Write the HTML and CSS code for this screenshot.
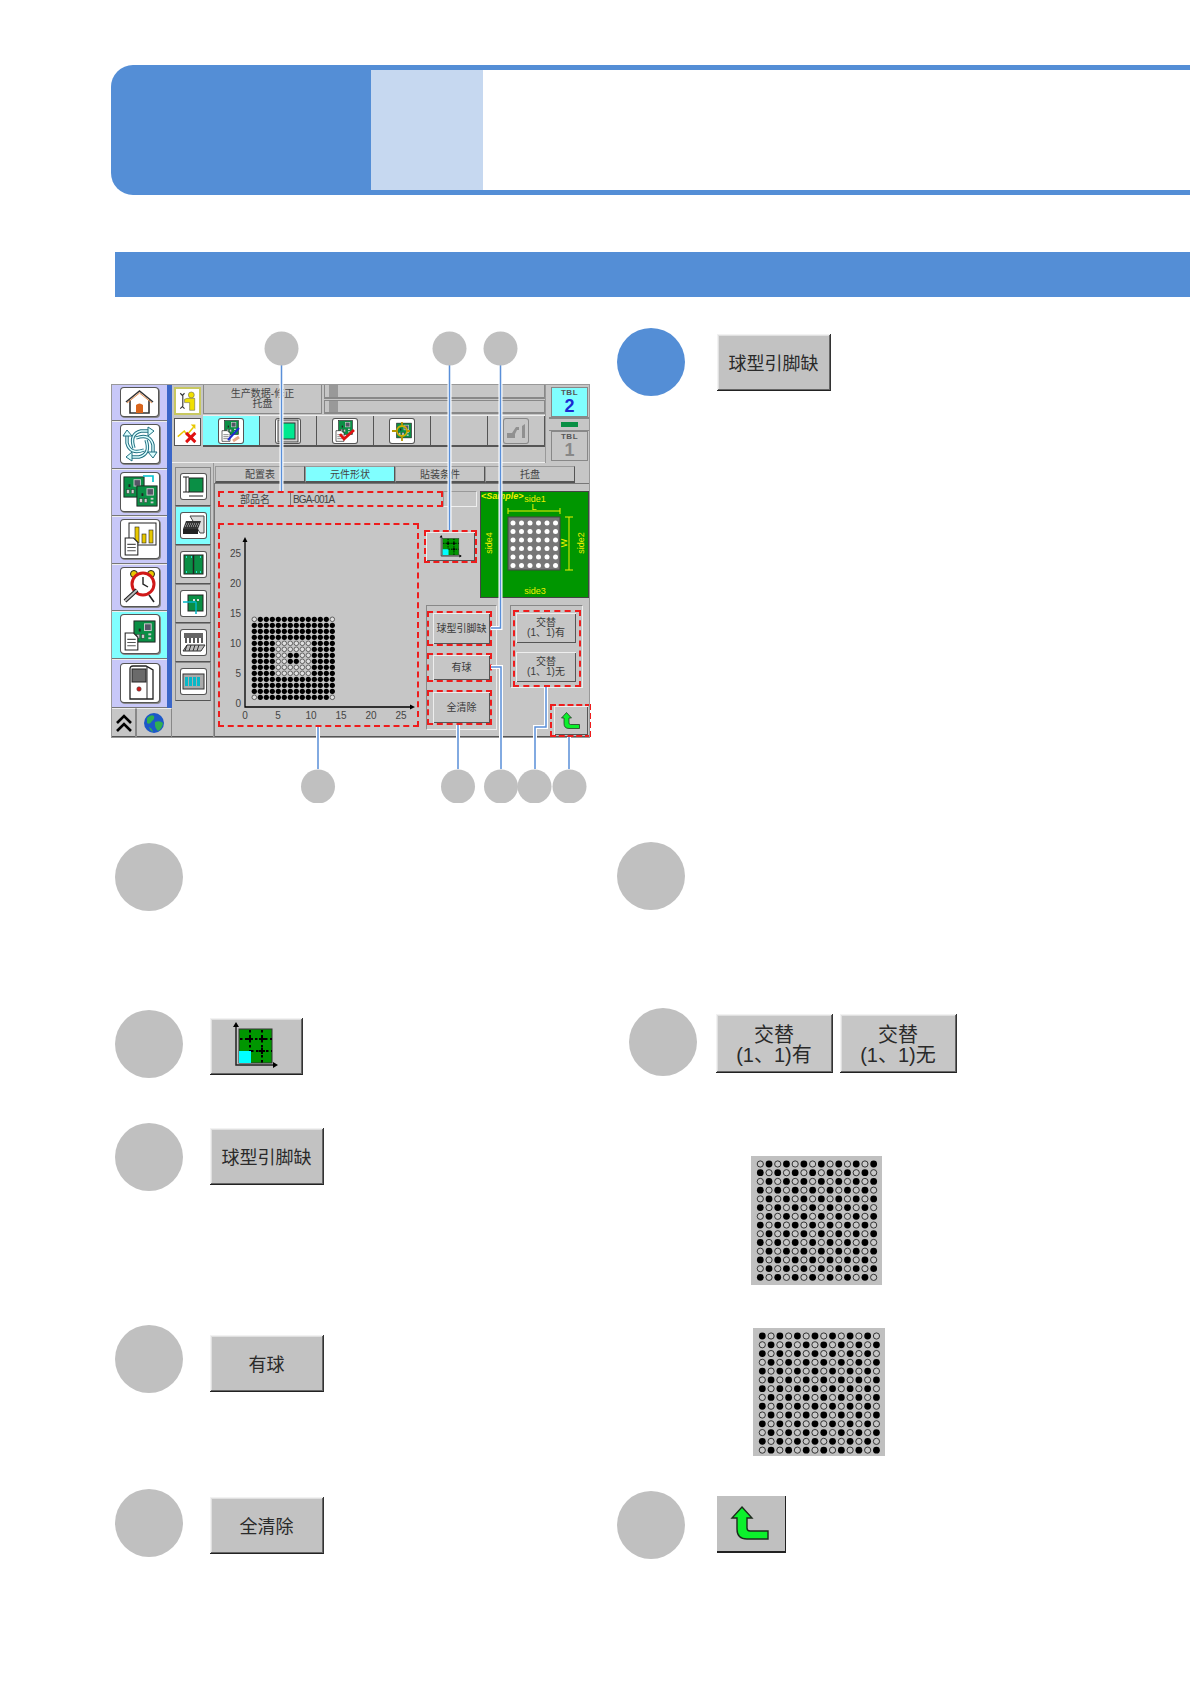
FILE: index.html
```html
<!DOCTYPE html>
<html lang="zh">
<head>
  <meta charset="UTF-8">
  <title>元件形状</title>
  <link rel="stylesheet" href="styles.css">
</head>
<body>
  <svg class="defs" width="0" height="0">
    <defs>
      <symbol id="pcb" viewBox="0 0 24 24">
        <rect x="1" y="1" width="22" height="22" fill="#0a8f45" stroke="#222"/>
        <rect x="12" y="4" width="7" height="7" fill="#556" stroke="#ccc"/>
        <rect x="4" y="15" width="3" height="4" fill="#ccc" stroke="#333" stroke-width=".5"/>
        <rect x="9" y="15" width="3" height="4" fill="#ccc" stroke="#333" stroke-width=".5"/>
        <rect x="16" y="14" width="3" height="2" fill="#ccc"/>
        <rect x="16" y="18" width="3" height="2" fill="#ccc"/>
        <rect x="6" y="9" width="2" height="3" fill="#222"/>
      </symbol>
      <symbol id="doc" viewBox="0 0 14 18">
        <path d="M1 1h8l4 4v12H1z" fill="#fff" stroke="#222"/>
        <path d="M3 7h8M3 10h8M3 13h8" stroke="#555"/>
      </symbol>
      <symbol id="grid-icon" viewBox="0 0 92 57">
        <rect x="29" y="11" width="33" height="34" fill="#009600" stroke="#333"/>
        <rect x="29" y="33" width="12" height="12" fill="#00ffff"/>
        <path d="M40 12v21M52 12v33M30 21h32M41 33h21" stroke="#000" stroke-width="2" stroke-dasharray="2.500 2.500"/>
        <path d="M40 18v6M37 21h6M52 18v6M49 21h6M52 30v6M49 33h6" stroke="#000" stroke-width="2"/>
        <path d="M26 8v39h40" fill="none" stroke="#222" stroke-width="1.500"/>
        <path d="M26 4l-3 5h6zM68 47l-5-3v6z" fill="#000"/>
      </symbol>
      <symbol id="return-icon" viewBox="0 0 68 56">
        <path d="M25 11l10 11h-5v10q0 3 3 3h18v8H30q-10 0-10-10V22h-5z" fill="#0cf02c" stroke="#1c2a1c" stroke-width="1.400"/>
      </symbol>
      <path id="blade" d="M13 23Q8 9 20 6h7"/>
      <g id="blades">
        <use href="#blade"/>
        <use href="#blade" transform="rotate(90 19 19)"/>
        <use href="#blade" transform="rotate(180 19 19)"/>
        <use href="#blade" transform="rotate(270 19 19)"/>
      </g>
      <g id="heads">
        <path id="head" d="M27 2l6 4-6 5z"/>
        <use href="#head" transform="rotate(90 19 19)"/>
        <use href="#head" transform="rotate(180 19 19)"/>
        <use href="#head" transform="rotate(270 19 19)"/>
      </g>
    </defs>
  </svg>

  <div class="banner">
    <div class="banner-num"></div>
    <div class="banner-tab"></div>
    <div class="banner-title"></div>
  </div>
  <div class="section-bar"></div>

  <div class="columns">
    <div class="col-left">
      <div class="figure">
        <div class="screen">
          <div class="nav">
            <div class="nav-list">
              <div class="nav-btn nav-home"><span class="icon-box icon-home">
                <svg viewBox="0 0 37 28"><path d="M5 14L18.500 3 32 14M9 12v13h19V12" fill="none" stroke="#333" stroke-width="1.600"/><path d="M6 15L18.500 5 31 15" fill="none" stroke="#e89050" stroke-width="1"/><path d="M15 25v-8q3.500-3 7 0v8z" fill="#d8641c"/></svg>
              </span></div>
              <div class="nav-btn"><span class="icon-box">
                <svg viewBox="0 0 38 38">
                  <use href="#blades" fill="none" stroke="#1f6f80" stroke-width="3.400"/>
                  <use href="#blades" fill="none" stroke="#dff" stroke-width="1.400"/>
                  <use href="#heads" fill="#dff" stroke="#1f6f80"/>
                </svg>
              </span></div>
              <div class="nav-btn"><span class="icon-box">
                <svg viewBox="0 0 38 38"><use href="#pcb" x="2" y="2" width="22" height="24"/><use href="#pcb" x="15" y="11" width="22" height="24"/><path d="M22 3h10v6" fill="none" stroke="#00c0d0" stroke-width="1.600"/></svg>
              </span></div>
              <div class="nav-btn"><span class="icon-box">
                <svg viewBox="0 0 38 38"><rect x="8" y="3" width="27" height="22" fill="#fff" stroke="#222"/><rect x="14" y="7" width="4" height="16" fill="#e8c800" stroke="#222" stroke-width=".6"/><rect x="21" y="14" width="4" height="9" fill="#e8c800" stroke="#222" stroke-width=".6"/><rect x="28" y="10" width="4" height="13" fill="#e8c800" stroke="#222" stroke-width=".6"/><use href="#doc" x="3" y="17" width="15" height="19"/></svg>
              </span></div>
              <div class="nav-btn"><span class="icon-box">
                <svg viewBox="0 0 38 38"><circle cx="13" cy="6" r="3.500" fill="#e8c800" stroke="#222"/><circle cx="30" cy="6" r="3.500" fill="#e8c800" stroke="#222"/><circle cx="22" cy="16" r="11" fill="#fff" stroke="#d01818" stroke-width="3"/><path d="M22 9v7l5 3" fill="none" stroke="#222" stroke-width="1.400"/><path d="M4 33l12-11" stroke="#222" stroke-width="4"/><path d="M4 33l12-11" stroke="#bbb" stroke-width="1.800"/><path d="M28 27l5 7" stroke="#222" stroke-width="1.600"/></svg>
              </span></div>
              <div class="nav-btn nav-active"><span class="icon-box">
                <svg viewBox="0 0 38 38"><use href="#pcb" x="12" y="3" width="23" height="27"/><use href="#doc" x="3" y="17" width="15" height="19"/></svg>
              </span></div>
              <div class="nav-btn nav-last"><span class="icon-box">
                <svg viewBox="0 0 38 38"><path d="M9 5q0-3 3-3h13l7 4v29H9z" fill="#fff" stroke="#222" stroke-width="1.300"/><path d="M26 3v32" stroke="#222"/><rect x="11" y="5" width="14" height="13" fill="#6a6a6a" stroke="#222"/><circle cx="18" cy="25" r="2.200" fill="#d01818" stroke="#444" stroke-width=".6"/></svg>
              </span></div>
            </div>
            <div class="nav-bottom">
              <div class="nav-chevron">
                <svg width="18" height="20" viewBox="0 0 18 20"><path d="M2 10l7-7 7 7M2 18l7-7 7 7" fill="none" stroke="#000" stroke-width="2.600"/></svg>
              </div>
              <div class="nav-globe">
                <svg width="22" height="22" viewBox="0 0 22 22"><circle cx="11" cy="11" r="10" fill="#1c58c8"/><path d="M4 6q4-4 7-2 1 3-2 5-2 4-5 2zM12 10q5-2 8 1-1 6-5 8-4-4-3-9zM6 15q3 1 4 5-3-1-4-5z" fill="#30b050"/></svg>
              </div>
            </div>
          </div>

          <div class="main">
            <div class="hdr">
              <div class="hdr-left">
                <div class="hdr-row">
                  <div class="id-btn id-yellow">
                    <svg viewBox="0 0 27 28"><circle cx="18" cy="7" r="3.500" fill="#f0e000" stroke="#555" stroke-width=".6"/><path d="M13 11h9v14h-6v-9h-6v-4z" fill="#f0e000" stroke="#555" stroke-width=".6"/><path d="M5 5l3 3v12l-3 3M10 5L7 8M10 23l-3-3" fill="none" stroke="#333" stroke-width="1.300"/></svg>
                  </div>
                  <div class="title-box">生产数据-修正<br>托盘</div>
                  <div class="bars"><div class="bar"></div><div class="bar"></div></div>
                </div>
                <div class="hdr-row">
                  <div class="id-btn">
                    <svg viewBox="0 0 27 28"><path d="M3 19l7-6 3 4 7-8" fill="none" stroke="#e8c800" stroke-width="1.600"/><path d="M17 6h5v5z" fill="#e8c800"/><path d="M12 15l10 10M22 15L12 25" stroke="#e01010" stroke-width="3.200"/></svg>
                  </div>
                  <div class="tools">
                    <div class="tool tool-active"><span class="tool-icon">
                      <svg viewBox="0 0 24 24"><use href="#pcb" x="5" y="1" width="15" height="15"/><use href="#doc" x="2" y="11" width="10" height="12"/><path d="M9 21L20 9" stroke="#1c2ad0" stroke-width="2"/><path d="M14 22l6-4" stroke="#e8a888" stroke-width="3"/></svg>
                    </span></div>
                    <div class="tool"><span class="tool-icon">
                      <svg viewBox="0 0 24 24"><rect x="2" y="1" width="20" height="22" fill="#ccc" stroke="#444"/><rect x="5" y="4" width="14" height="16" fill="#00e890" stroke="#333"/></svg>
                    </span></div>
                    <div class="tool"><span class="tool-icon">
                      <svg viewBox="0 0 24 24"><use href="#pcb" x="5" y="1" width="15" height="15"/><use href="#doc" x="2" y="11" width="10" height="12"/><path d="M7 15l4 5 10-9" fill="none" stroke="#e01010" stroke-width="2.800"/></svg>
                    </span></div>
                    <div class="tool"><span class="tool-icon">
                      <svg viewBox="0 0 24 24"><use href="#pcb" x="6" y="2" width="16" height="19"/><circle cx="12" cy="12" r="5" fill="none" stroke="#d0b000" stroke-width="1.800"/><path d="M2 12h6M16 12h4M12 6V3M12 17v5" stroke="#b89800" stroke-width="1.800"/></svg>
                    </span></div>
                    <div class="tool"></div>
                    <div class="tool"><span class="tool-icon tool-icon-off">
                      <svg viewBox="0 0 24 24"><path d="M3 19v-5h5l4-6h3v3h-2l-2 4v4z" fill="#909090"/><path d="M18 7l3-2v14h-3z" fill="#909090"/></svg>
                    </span></div>
                  </div>
                </div>
                <div class="hdr-strip"></div>
              </div>
              <div class="tbl-col">
                <div class="tbl tbl-on"><span class="tbl-name">TBL</span><span class="tbl-num">2</span></div>
                <div class="tbl-pin"><span></span></div>
                <div class="tbl"><span class="tbl-name">TBL</span><span class="tbl-num">1</span></div>
              </div>
            </div>

            <div class="work">
              <div class="side">
                <div class="side-btn"><span class="side-icon">
                  <svg viewBox="0 0 25 25"><rect x="8" y="4" width="14" height="14" fill="#0a8f45" stroke="#222"/><path d="M5 3v15M2 3h6M2 18h6M8 22h14" stroke="#222"/></svg>
                </span></div>
                <div class="side-btn side-active"><span class="side-icon">
                  <svg viewBox="0 0 25 25"><path d="M9 3h14v17h-4z" fill="#ddd" stroke="#444"/><path d="M5 8h15l-3 8H2z" fill="#333"/><path d="M5 11h13M4 13h13" stroke="#ccc" stroke-dasharray="1 1"/><path d="M2 16h15v5H2z" fill="#222"/></svg>
                </span></div>
                <div class="side-btn"><span class="side-icon">
                  <svg viewBox="0 0 25 25"><rect x="3" y="3" width="19" height="19" fill="#0a8f45" stroke="#222"/><path d="M12.500 3v19" stroke="#222" stroke-width="1.500"/><path d="M5 5h1M19 5h1M5 20h1M19 20h1M10 5h1M15 20h1" stroke="#3ff" stroke-width="1.500"/></svg>
                </span></div>
                <div class="side-btn"><span class="side-icon">
                  <svg viewBox="0 0 25 25"><rect x="7" y="4" width="15" height="16" fill="#0a8f45" stroke="#222"/><path d="M2 11h13M15 11v12" stroke="#00b8c8" stroke-width="1.500"/><rect x="12" y="8" width="2" height="2" fill="#ddd"/><rect x="16" y="8" width="2" height="2" fill="#ddd"/></svg>
                </span></div>
                <div class="side-btn"><span class="side-icon">
                  <svg viewBox="0 0 25 25"><path d="M3 3h19v5H3z" fill="#666"/><path d="M5 8v5M9 8v5M13 8v5M17 8v5M21 8v5" stroke="#333" stroke-width="1.600"/><path d="M2 21l4-6h18l-4 6z" fill="#bbb" stroke="#333"/><path d="M6 15l-2 6M10 15l-2 6M14 15l-2 6M18 15l-2 6" stroke="#333"/></svg>
                </span></div>
                <div class="side-btn"><span class="side-icon">
                  <svg viewBox="0 0 25 25"><rect x="2" y="5" width="21" height="15" fill="#aaa" stroke="#333"/><rect x="4" y="8" width="3" height="9" fill="#08b8c8"/><rect x="8" y="8" width="3" height="9" fill="#08b8c8"/><rect x="12" y="8" width="3" height="9" fill="#08b8c8"/><rect x="16" y="8" width="3" height="9" fill="#08b8c8"/></svg>
                </span></div>
              </div>

              <div class="content">
                <div class="tabs">
                  <div class="tab">配置表</div>
                  <div class="tab tab-active">元件形状</div>
                  <div class="tab">貼装条件</div>
                  <div class="tab">托盘</div>
                </div>
                <div class="panel">
                  <div class="name-row">
                    <div class="name-box dash">
                      <span class="name-label">部品名</span>
                      <span class="name-value">BGA-001A</span>
                    </div>
                    <div class="name-rest"></div>
                  </div>

                  <div class="sample">
                    <svg viewBox="479 491 109 107" width="109" height="107">
                      <text class="sample-tag" x="480" y="499">&lt;Sample&gt;</text>
                      <text class="sample-text" x="534" y="502" text-anchor="middle">side1</text>
                      <text class="sample-text" x="534" y="594" text-anchor="middle">side3</text>
                      <text class="sample-text" transform="translate(491 543) rotate(-90)" text-anchor="middle">side4</text>
                      <text class="sample-text" transform="translate(583 543) rotate(-90)" text-anchor="middle">side2</text>
                      <text class="sample-text" x="533" y="510" text-anchor="middle">L</text>
                      <text class="sample-text" transform="translate(566 543) rotate(-90)" text-anchor="middle">W</text>
                      <path d="M507 511h52M507 508v6M559 508v6M568 517v53M564 517h8M564 570h8" stroke="#f0f000" fill="none"/>
                      <rect x="507" y="517" width="52" height="53" fill="#777" stroke="#444"/>
                      <g id="sample-dots"></g>
                    </svg>
                  </div>

                  <div class="chart dash">
                    <svg viewBox="219 525 197 200" width="197" height="200">
                      <path d="M244 541v166h166" fill="none" stroke="#000" stroke-width="1.300"/>
                      <path d="M244 537l-2.500 5h5zM414 707l-5-2.500v5z" fill="#000"/>
                      <g class="chart-text" text-anchor="end">
                        <text x="240" y="557">25</text><text x="240" y="587">20</text><text x="240" y="617">15</text>
                        <text x="240" y="647">10</text><text x="240" y="677">5</text><text x="240" y="707">0</text>
                      </g>
                      <g class="chart-text" text-anchor="middle">
                        <text x="244" y="719">0</text><text x="277" y="719">5</text><text x="310" y="719">10</text>
                        <text x="340" y="719">15</text><text x="370" y="719">20</text><text x="400" y="719">25</text>
                      </g>
                      <g id="chart-dots"></g>
                    </svg>
                  </div>

                  <div class="grid-wrap dash">
                    <div class="btn btn-small"><svg width="46" height="28"><use href="#grid-icon"/></svg></div>
                  </div>

                  <div class="group-left">
                    <div class="dash group-item item-ball"><div class="btn btn-small">球型引脚缺</div></div>
                    <div class="dash group-item item-has"><div class="btn btn-small">有球</div></div>
                    <div class="dash group-item item-clear"><div class="btn btn-small">全清除</div></div>
                  </div>

                  <div class="group-right">
                    <div class="dash swap-box">
                      <div class="btn btn-small btn-swap">交替<br>(1、1)有</div>
                      <div class="btn btn-small btn-swap">交替<br>(1、1)无</div>
                    </div>
                  </div>

                  <div class="return-wrap dash">
                    <div class="btn btn-small"><svg width="34" height="28"><use href="#return-icon"/></svg></div>
                  </div>
                </div>
              </div>
            </div>
          </div>
        </div>

        <svg class="callouts" viewBox="111 331 479 472" width="479" height="472">
          <g class="halo">
            <path d="M281.500 365V491M449.500 365V530M500.500 365V628H491M491 667H501V769M458 725V769M546 687V727H535V769M569 737V769M318 727V769"/>
          </g>
          <g class="leader">
            <path d="M281.500 365V491M449.500 365V530M500.500 365V628H491M491 667H501V769M458 725V769M546 687V727H535V769M569 737V769M318 727V769"/>
          </g>
          <g class="pins">
            <circle cx="281.500" cy="348.500" r="17"/><circle cx="449.500" cy="348.500" r="17"/><circle cx="500.500" cy="348.500" r="17"/>
            <circle cx="318" cy="786.500" r="17"/><circle cx="458" cy="786.500" r="17"/><circle cx="501" cy="786.500" r="17"/>
            <circle cx="534.500" cy="786.500" r="17"/><circle cx="569.500" cy="786.500" r="17"/>
          </g>
        </svg>
      </div>

      <div class="step step-l1"><div class="num"></div></div>
      <div class="step step-l2">
        <div class="num"></div>
        <div class="btn btn-big btn-grid"><svg width="92" height="57"><use href="#grid-icon"/></svg></div>
      </div>
      <div class="step step-l3">
        <div class="num"></div>
        <div class="btn btn-big">球型引脚缺</div>
      </div>
      <div class="step step-l4">
        <div class="num"></div>
        <div class="btn btn-big">有球</div>
      </div>
      <div class="step step-l5">
        <div class="num"></div>
        <div class="btn btn-big">全清除</div>
      </div>
    </div>

    <div class="col-right">
      <div class="step step-r1">
        <div class="num num-blue"></div>
        <div class="btn btn-big">球型引脚缺</div>
      </div>
      <div class="step step-r2"><div class="num"></div></div>
      <div class="step step-r3">
        <div class="num"></div>
        <div class="swap-pair">
          <div class="btn btn-big btn-wide">交替<br>(1、1)有</div>
          <div class="btn btn-big btn-wide">交替<br>(1、1)无</div>
        </div>
      </div>
      <svg class="pattern pattern-a" id="pattern-a" width="131" height="129"></svg>
      <svg class="pattern pattern-b" id="pattern-b" width="132" height="128"></svg>
      <div class="step step-r4">
        <div class="num"></div>
        <div class="btn btn-return"><svg width="68" height="56"><use href="#return-icon"/></svg></div>
      </div>
    </div>
  </div>

  <script src="script.js"></script>
</body>
</html>
```

FILE: styles.css
```css
* {
  box-sizing: border-box;
}
body {
  margin: 0;
  min-height: 1684px;
  background: #fff;
  overflow-x: hidden;
  color: #333;
  font-family: "Liberation Sans", "Noto Sans CJK SC", sans-serif;
}
.defs {
  position: absolute;
}
svg {
  display: block;
}

/* page head */
.banner {
  display: flex;
  height: 130px;
  margin: 65px 0 0 111px;
  padding: 5px 0;
  background: #548ed6;
  border-radius: 22px 0 0 22px;
}
.banner-num {
  width: 260px;
}
.banner-tab {
  width: 112px;
  background: #c6d8f0;
}
.banner-title {
  flex: 1;
  background: #fff;
}
.section-bar {
  height: 45px;
  margin: 57px 0 0 115px;
  background: #548ed6;
}

.columns {
  display: grid;
  grid-template-columns: 506px 1fr;
  margin-left: 111px;
}

/* numbered rows */
.step {
  display: flex;
  align-items: flex-start;
}
.col-left .step {
  margin-left: 4px;
  gap: 27px;
}
.col-right .step {
  gap: 32px;
}
.num {
  flex: none;
  width: 68px;
  height: 68px;
  border-radius: 50%;
  background: #c0c0c0;
}
.num-blue {
  background: #548ed6;
}
.step-l1 { margin-top: 40px; }
.step-l2 { margin-top: 99px; }
.step-l3 { margin-top: 45px; }
.step-l4 { margin-top: 134px; }
.step-l5 { margin-top: 96px; }
.step-l2 .btn { margin-top: 8px; }
.step-l3 .btn { margin-top: 5px; }
.step-l4 .btn { margin-top: 10px; }
.step-l5 .btn { margin-top: 8px; }
.step-r1 { margin-top: 31px; }
.step-r1 .btn { margin-top: 6px; }
.step-r2 { margin-top: 446px; }
.col-right .step-r3 {
  margin: 98px 0 0 12px;
  gap: 19px;
}
.swap-pair {
  display: flex;
  gap: 7px;
  margin-top: 6px;
}
.pattern {
  background: #c0c0c0;
}
.pattern-a { margin: 80px 0 0 134px; }
.pattern-b { margin: 43px 0 0 136px; }
.step-r4 { margin-top: 35px; }
.step-r4 .btn { margin-top: 5px; }

/* bevel buttons */
.btn {
  display: flex;
  align-items: center;
  justify-content: center;
  text-align: center;
  background: #c2c2c2;
  box-shadow: inset 1px 1px #f2f2f2, inset -1px -1px #666, inset 2px 2px #e0e0e0;
}
.btn-big {
  flex: none;
  width: 114px;
  height: 57px;
  color: #2a2a2a;
  font-size: 18px;
  border-bottom: 1px solid #222;
  border-right: 1px solid #333;
}
.btn-grid {
  width: 93px;
}
.btn-wide {
  width: 117px;
  height: 59px;
  padding-top: 3px;
  font-size: 20px;
  line-height: 20px;
  background: #c6c6c6;
}
.btn-return {
  width: 69px;
  height: 57px;
  background: #c0c0c0;
  box-shadow: none;
  border-right: 1px solid #222;
  border-bottom: 2px solid #222;
}
.btn-small {
  width: 100%;
  height: 100%;
  font-size: 10px;
  line-height: 10px;
  color: #3a3a3a;
  background: #c6c6c6;
  box-shadow: inset 1px 1px #eee, inset -1px -1px #555;
}
.dash {
  border: 2px dashed #ee1c1c;
}

/* figure with the machine screen */
.figure {
  position: relative;
  height: 472px;
  margin-top: 34px;
  padding-top: 53px;
}
.callouts {
  position: absolute;
  top: 0;
  left: 0;
  pointer-events: none;
}
.halo path {
  fill: none;
  stroke: #fff;
  stroke-width: 4px;
}
.leader path {
  fill: none;
  stroke: #5a8fd8;
  stroke-width: 1.5px;
}
.pins circle {
  fill: #c0c0c0;
}
.screen {
  display: grid;
  grid-template-columns: 61px 1fr;
  width: 479px;
  height: 354px;
  background: #c6c6c6;
  border-bottom: 2px solid #555;
  outline: 1px solid #999;
  outline-offset: -1px;
}

.nav {
  display: flex;
  flex-direction: column;
}
.nav-list {
  border-right: 5px solid #3a66c8;
  border-left: 1px solid #999;
}
.nav-btn {
  display: flex;
  align-items: center;
  justify-content: center;
  height: 47.500px;
  background: #c8c8f8;
  border-bottom: 1px solid #777;
  box-shadow: inset 0 1px #eee;
}
.nav-home {
  height: 37px;
}
.nav-last {
  height: 49px;
}
.nav-active {
  background: #80ffff;
}
.icon-box {
  display: block;
  width: 38px;
  height: 38px;
  background: #fff;
  border-radius: 3px;
  box-shadow: 0 0 0 1px #555, 1px 1px 0 1px #888;
}
.icon-home {
  width: 37px;
  height: 28px;
}
.nav-bottom {
  display: flex;
  flex: 1;
}
.nav-chevron,
.nav-globe {
  display: flex;
  align-items: center;
  justify-content: center;
  border: 1px solid #888;
  border-top-color: #eee;
}
.nav-chevron {
  width: 25px;
}
.nav-globe {
  flex: 1;
}

.main {
  display: flex;
  flex-direction: column;
  min-width: 0;
}
.hdr {
  display: flex;
  height: 79px;
}
.hdr-left {
  display: flex;
  flex-direction: column;
  width: 374px;
}
.hdr-row {
  display: flex;
  height: 31px;
  padding-left: 2px;
  gap: 2px;
}
.hdr-row + .hdr-row {
  height: 32px;
}
.id-btn {
  flex: none;
  width: 27px;
  height: 28px;
  margin-top: 3px;
  background: #fff;
  border: 1px solid #555;
}
.id-yellow {
  border: 2px solid #c8c860;
}
.title-box {
  width: 119px;
  height: 30px;
  padding-top: 4px;
  font-size: 10px;
  line-height: 10px;
  text-align: center;
  color: #444;
  border: 1px solid #888;
}
.bars {
  flex: 1;
  display: flex;
  flex-direction: column;
}
.bar {
  flex: 1;
  margin-bottom: 1px;
  padding-left: 4px;
  border: 1px solid #888;
  border-bottom-width: 2px;
}
.bar::before {
  content: "";
  display: block;
  width: 9px;
  height: 100%;
  background: #999;
}
.tools {
  display: flex;
  height: 32px;
  border-top: 1px solid #eee;
  border-bottom: 2px solid #555;
}
.tool {
  display: flex;
  align-items: center;
  justify-content: center;
  width: 57px;
  border-right: 1px solid #555;
}
.tool-active {
  background: #80ffff;
}
.tool-icon {
  width: 24px;
  height: 24px;
  background: #fff;
  border-radius: 2px;
  box-shadow: 0 0 0 1px #555;
}
.tool-icon-off {
  background: #c6c6c6;
  box-shadow: 0 0 0 1px #888;
}
.hdr-strip {
  flex: 1;
  border-bottom: 1px solid #eee;
}
.tbl-col {
  flex: 1;
  padding: 3px 2px 0 5px;
  border-left: 1px solid #999;
}
.tbl {
  display: flex;
  flex-direction: column;
  align-items: center;
  width: 37px;
  height: 30px;
  font-weight: bold;
  color: #888;
  border: 1px solid #888;
}
.tbl-on {
  color: #1c2ad0;
  background: #80ffff;
}
.tbl-name {
  font-size: 8px;
  line-height: 10px;
  letter-spacing: .5px;
  color: #555;
}
.tbl-num {
  font-size: 18px;
  line-height: 17px;
}
.tbl-pin {
  display: flex;
  justify-content: center;
  height: 14px;
  margin: 0 -2px;
  padding: 3px 0;
  border-top: 2px solid #888;
  border-bottom: 1px solid #888;
}
.tbl-pin span {
  width: 17px;
  background: #0a8f45;
}

.work {
  flex: 1;
  display: flex;
  min-height: 0;
}
.side {
  flex: none;
  width: 42px;
  padding: 4px 0 0 3px;
  border-right: 1px solid #999;
}
.side-btn {
  display: flex;
  align-items: center;
  justify-content: center;
  width: 36px;
  height: 39px;
  border: 1px solid #888;
  border-bottom-color: #555;
}
.side-active {
  background: #80ffff;
}
.side-icon {
  width: 25px;
  height: 25px;
  background: #fff;
  border-radius: 2px;
  box-shadow: 0 0 0 1px #555;
}
.content {
  flex: 1;
  min-width: 0;
}
.tabs {
  display: flex;
  height: 17px;
  margin-top: 3px;
  padding-left: 1px;
}
.tab {
  width: 90px;
  font-size: 10px;
  line-height: 16px;
  text-align: center;
  color: #444;
  border: 1px solid #999;
  border-bottom: 2px solid #555;
  border-right-color: #555;
}
.tab-active {
  background: #80ffff;
}
.panel {
  display: grid;
  grid-template-columns: 201px 58px 20px 94px;
  grid-template-rows: 16px 91px 106px 34px;
  height: 255px;
  padding: 7px 0 0 3px;
  border-top: 1px solid #777;
  border-left: 1px solid #777;
}

.name-row {
  grid-column: 1 / 3;
  grid-row: 1;
  display: flex;
}
.name-box {
  display: flex;
  width: 225px;
  font-size: 10px;
  line-height: 13px;
  color: #444;
}
.name-label {
  width: 71px;
  text-align: center;
  border-right: 1px solid #777;
}
.name-value {
  padding-left: 2px;
  letter-spacing: -.8px;
}
.name-rest {
  flex: 1;
  border: 1px solid #999;
  border-right-color: #eee;
  border-bottom-color: #eee;
}
.sample {
  grid-column: 3 / 5;
  grid-row: 1 / 3;
  width: 109px;
  height: 107px;
  margin-left: 3px;
  background: #009600;
  outline: 1px solid #444;
  outline-offset: -1px;
}
.sample-text {
  font-size: 9px;
  fill: #f0f000;
}
.sample-tag {
  font-size: 9px;
  font-style: italic;
  font-weight: bold;
  fill: #f0f000;
}
.chart {
  grid-column: 1;
  grid-row: 2 / 5;
  height: 204px;
  margin-top: 16px;
}
.chart-text {
  font-size: 10px;
  fill: #444;
}
.grid-wrap {
  grid-column: 2;
  grid-row: 2;
  width: 53px;
  height: 33px;
  margin: 23px 0 0 5px;
}
.group-left {
  grid-column: 2 / 4;
  grid-row: 3 / 5;
  position: relative;
  width: 71px;
  height: 125px;
  margin: 7px 0 0 7px;
  padding: 5px 4px 0 0;
  border: 1px solid #888;
  border-right-color: #eee;
  border-bottom-color: #eee;
}
.group-item {
  height: 29px;
  padding-left: 4px;
}
.item-ball {
  height: 35px;
  margin-bottom: 7px;
}
.item-has {
  margin-bottom: 8px;
}
.item-clear {
  height: 35px;
}
.group-right {
  grid-column: 4;
  grid-row: 3;
  width: 73px;
  height: 83px;
  margin: 7px 0 0 13px;
  padding: 4px 1px 0 2px;
  border: 1px solid #888;
  border-right-color: #eee;
  border-bottom-color: #eee;
}
.swap-box {
  display: flex;
  flex-direction: column;
  gap: 9px;
  height: 77px;
  padding: 1px 3px 0 1px;
}
.btn-swap {
  height: 30px;
  flex: none;
  line-height: 10px;
}
.return-wrap {
  grid-column: 4;
  grid-row: 4;
  width: 41px;
  height: 33px;
  margin-left: 53px;
  padding: 0 1px 0 2px;
}
```

FILE: script.js
```js
const NS = 'http://www.w3.org/2000/svg';

function drawDots(parent, opts) {
  for (let row = 0; row < opts.rows; row++) {
    for (let col = 0; col < opts.cols; col++) {
      const dot = document.createElementNS(NS, 'circle');
      const filled = opts.filled(row, col);
      dot.setAttribute('cx', opts.x + col * opts.step);
      dot.setAttribute('cy', opts.y + row * opts.step);
      dot.setAttribute('r', filled ? opts.r : opts.r - 0.3);
      dot.setAttribute('fill', filled ? opts.on : opts.off);
      if (!filled) {
        dot.setAttribute('stroke', opts.line);
        dot.setAttribute('stroke-width', 0.9);
      }
      parent.appendChild(dot);
    }
  }
}

// bare corners and a bare ring round a two by two block
function chartBall(row, col) {
  const corner = (row === 0 || row === 13) && (col === 0 || col === 13);
  const ring = row >= 4 && row <= 9 && col >= 4 && col <= 9;
  const centre = row >= 6 && row <= 7 && col >= 6 && col <= 7;
  return !corner && (!ring || centre);
}

drawDots(document.getElementById('chart-dots'), {
  rows: 14, cols: 14, x: 253.3, y: 619.3, step: 6, r: 2.6,
  on: '#000', off: '#e0e0e0', line: '#555', filled: chartBall
});

drawDots(document.getElementById('sample-dots'), {
  rows: 6, cols: 6, x: 512, y: 523, step: 8.5, r: 2.5,
  on: '#fff', off: '#fff', line: '#fff', filled: () => true
});

drawDots(document.getElementById('pattern-a'), {
  rows: 14, cols: 14, x: 9.3, y: 8, step: 8.72, r: 3.4,
  on: '#000', off: '#c8c8c8', line: '#222', filled: (r, c) => (r + c) % 2 === 1
});

drawDots(document.getElementById('pattern-b'), {
  rows: 14, cols: 14, x: 9.3, y: 8, step: 8.78, r: 3.4,
  on: '#000', off: '#c8c8c8', line: '#222', filled: (r, c) => (r + c) % 2 === 0
});
```
